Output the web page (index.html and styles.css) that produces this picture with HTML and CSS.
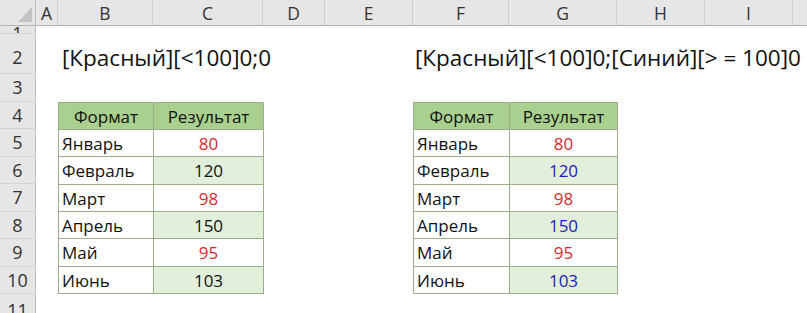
FILE: index.html
```html
<!DOCTYPE html>
<html lang="ru">
    <head>
        <meta charset="UTF-8" />
        <title>Пользовательский формат: цвет по условию</title>
        <link rel="stylesheet" href="styles.css">
    </head>
    <body>
        <div class="sheet">
            <!-- угол листа -->
            <div class="corner"><span class="tri"></span></div>

            <!-- заголовки столбцов -->
            <div class="colh">A</div>
            <div class="colh">B</div>
            <div class="colh">C</div>
            <div class="colh">D</div>
            <div class="colh">E</div>
            <div class="colh">F</div>
            <div class="colh">G</div>
            <div class="colh">H</div>
            <div class="colh">I</div>
            <div class="colh last"></div>

            <!-- номера строк -->
            <div class="rowh r1"><span>1</span></div>
            <div class="rowh r2">2</div>
            <div class="rowh r3">3</div>
            <div class="rowh r4">4</div>
            <div class="rowh r5">5</div>
            <div class="rowh r6">6</div>
            <div class="rowh r7">7</div>
            <div class="rowh r8">8</div>
            <div class="rowh r9">9</div>
            <div class="rowh r10">10</div>
            <div class="rowh r11">11</div>

            <!-- строка 2: коды форматов -->
            <div class="fmt fmt-left">[Красный][&lt;100]0;0</div>
            <div class="fmt fmt-right">[Красный][&lt;100]0;[Синий][&gt; = 100]0</div>

            <!-- таблица 1 -->
            <table class="tbl tbl-left">
                <colgroup><col class="c-name"><col class="c-val"></colgroup>
                <tr><th>Формат</th><th>Результат</th></tr>
                <tr><td>Январь</td><td class="num red">80</td></tr>
                <tr><td>Февраль</td><td class="num">120</td></tr>
                <tr><td>Март</td><td class="num red">98</td></tr>
                <tr><td>Апрель</td><td class="num">150</td></tr>
                <tr><td>Май</td><td class="num red">95</td></tr>
                <tr><td>Июнь</td><td class="num">103</td></tr>
            </table>

            <!-- таблица 2 -->
            <table class="tbl tbl-right">
                <colgroup><col class="c-name2"><col class="c-val2"></colgroup>
                <tr><th>Формат</th><th>Результат</th></tr>
                <tr><td>Январь</td><td class="num red">80</td></tr>
                <tr><td>Февраль</td><td class="num blue">120</td></tr>
                <tr><td>Март</td><td class="num red">98</td></tr>
                <tr><td>Апрель</td><td class="num blue">150</td></tr>
                <tr><td>Май</td><td class="num red">95</td></tr>
                <tr><td>Июнь</td><td class="num blue">103</td></tr>
            </table>
        </div>
    </body>
</html>
```

FILE: styles.css
```css
* {
    box-sizing: border-box;
}

body {
    margin: 0;
    background-color: #fff;
    font-family: "Open Sans", "Noto Sans", sans-serif;
    overflow: hidden;
}

/* лист: сетка столбцов и строк */
.sheet {
    display: grid;
    grid-template-columns: 36px 22px 95px 110px 62px 88px 96px 108px 88px 88px 1fr;
    grid-template-rows: 26px 8px 40px repeat(9, 27.5px);
    width: 807px;
    height: 313px;
}

/* угол с треугольником */
.corner {
    grid-row: 1;
    grid-column: 1;
    position: relative;
    background-color: #e6e6e6;
    border-right: 1px solid #bdbdbd;
    border-bottom: 1px solid #b4b4b4;
}
.tri {
    position: absolute;
    right: 3px;
    bottom: 3px;
    width: 0;
    height: 0;
    border-left: 14px solid transparent;
    border-bottom: 15px solid #c3c3c3;
}

/* заголовки столбцов */
.colh {
    grid-row: 1;
    display: flex;
    align-items: center;
    justify-content: center;
    padding-top: 1px;
    background-color: #e6e6e6;
    border-right: 1px solid #cfcfcf;
    border-bottom: 1px solid #b4b4b4;
    color: #333;
    font-size: 17.5px;
}
.colh.last {
    border-right: 0;
}

/* номера строк */
.rowh {
    grid-column: 1;
    display: flex;
    align-items: center;
    justify-content: center;
    background-color: #e6e6e6;
    border-right: 1px solid #bdbdbd;
    border-bottom: 1px solid #d3d3d3;
    color: #333;
    font-size: 18px;
}
.r1 { grid-row: 2; overflow: hidden; align-items: flex-end; }
.r1 span { line-height: 1; margin-bottom: -9px; }
.r2 { grid-row: 3; align-items: flex-end; padding-bottom: 4px; }
.r3 { grid-row: 4; }
.r4 { grid-row: 5; }
.r5 { grid-row: 6; }
.r6 { grid-row: 7; }
.r7 { grid-row: 8; }
.r8 { grid-row: 9; }
.r9 { grid-row: 10; }
.r10 { grid-row: 11; }
.r11 { grid-row: 12; border-bottom: 0; align-items: flex-start; padding-top: 4px; }

/* коды формата в строке 2 */
.fmt {
    grid-row: 3;
    align-self: end;
    padding: 0 0 1px 4px;
    font-size: 22.5px;
    color: #111;
    white-space: nowrap;
}
.fmt-left { grid-column: 3 / 6; }
.fmt-right { grid-column: 7 / 11; padding-left: 2px; }

/* таблицы */
.tbl {
    grid-row: 5 / 12;
    border-collapse: collapse;
    table-layout: fixed;
    width: 100%;
    height: 100%;
    font-size: 17px;
    color: #111;
}
.tbl-left { grid-column: 3 / 5; }
.tbl-right { grid-column: 7 / 9; }

.c-name { width: 95px; }
.c-val { width: 110px; }
.c-name2 { width: 96px; }
.c-val2 { width: 108px; }

.tbl th,
.tbl td {
    border: 1px solid #9caf8b;
    padding: 1px 3px 0;
    white-space: nowrap;
}
.tbl th {
    background-color: #a9d08e;
    font-weight: normal;
    text-align: center;
}
.tbl td.num {
    text-align: center;
}
/* светло-зелёная заливка через строку */
.tbl tr:nth-child(odd) td.num {
    background-color: #e2efda;
}

.red { color: #d42a30; }
.blue { color: #1c1cc0; }
```
